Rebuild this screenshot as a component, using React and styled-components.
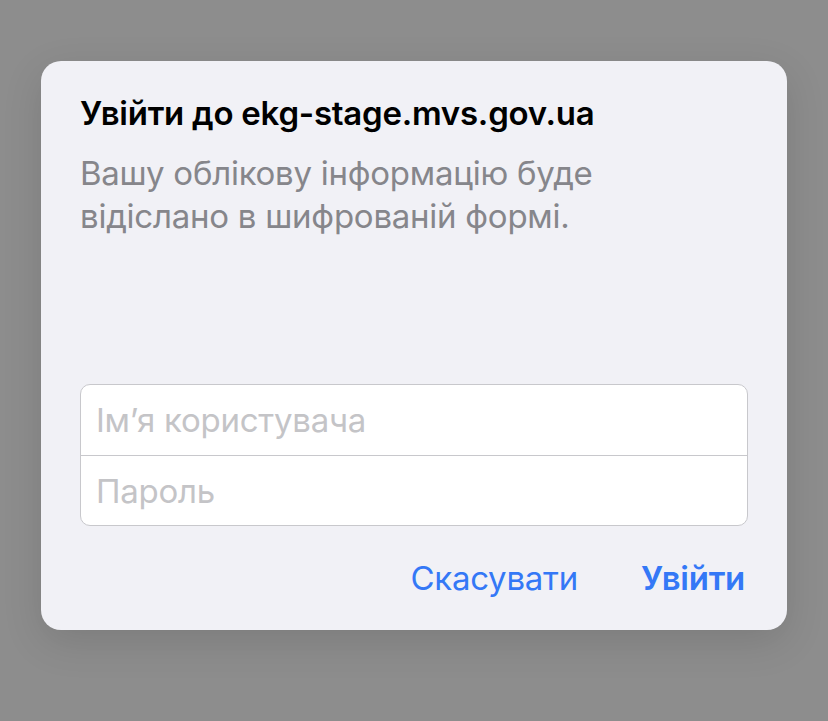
import React from 'react';
import styled, { createGlobalStyle } from 'styled-components';

const GlobalStyle = createGlobalStyle`
  html, body {
    margin: 0;
    padding: 0;
    background: #8d8d8d;
    font-family: Inter, "Noto Sans", sans-serif;
  }
`;

const Backdrop = styled.div`
  width: 828px;
  height: 721px;
  padding: 61px 0 0 41px;
  box-sizing: border-box;
`;

const Dialog = styled.div`
  width: 746px;
  height: 569px;
  box-sizing: border-box;
  background: #f1f1f6;
  border-radius: 20px;
  box-shadow: 0 12px 40px rgba(0, 0, 0, 0.12);
  padding: 32px 39px 0 39px;
  display: flex;
  flex-direction: column;
`;

const Title = styled.h1`
  margin: 0;
  font-size: 33px;
  line-height: 40px;
  font-weight: 600;
  color: #000;
  letter-spacing: -0.25px;
`;

const Message = styled.p`
  margin: 19px 0 0;
  font-size: 33px;
  line-height: 43px;
  font-weight: 400;
  color: #86868b;
  letter-spacing: -0.25px;
`;

const Fields = styled.div`
  margin-top: 146px;
  background: #fff;
  border: 1px solid #c8c8cc;
  border-radius: 10px;
  overflow: hidden;
`;

const Field = styled.input`
  display: block;
  width: 100%;
  height: ${p => (p.$first ? 71 : 69)}px;
  box-sizing: border-box;
  border: none;
  border-bottom: ${p => (p.$first ? '1px solid #c8c8cc' : 'none')};
  padding: 0 15px;
  font-family: Inter, "Noto Sans", sans-serif;
  font-size: 33px;
  letter-spacing: -0.25px;
  color: #000;
  background: transparent;
  outline: none;
  &::placeholder {
    color: #c4c4c7;
  }
`;

const Actions = styled.div`
  display: flex;
  justify-content: flex-end;
  align-items: center;
  gap: 63px;
  margin-top: 32px;
  padding-right: 3px;
`;

const Action = styled.button`
  border: none;
  background: none;
  padding: 0;
  font-family: Inter, "Noto Sans", sans-serif;
  font-size: 33px;
  line-height: 40px;
  font-weight: ${p => (p.$primary ? 600 : 400)};
  color: #3478f6;
  letter-spacing: -0.25px;
  cursor: pointer;
`;

export default function App() {
  return (
    <>
      <GlobalStyle />
      <Backdrop>
        <Dialog>
          <Title>Увійти до ekg-stage.mvs.gov.ua</Title>
          <Message>
            Вашу облікову інформацію буде
            <br />
            відіслано в шифрованій формі.
          </Message>
          <Fields>
            <Field $first placeholder="Імʼя користувача" />
            <Field type="password" placeholder="Пароль" />
          </Fields>
          <Actions>
            <Action>Скасувати</Action>
            <Action $primary>Увійти</Action>
          </Actions>
        </Dialog>
      </Backdrop>
    </>
  );
}
